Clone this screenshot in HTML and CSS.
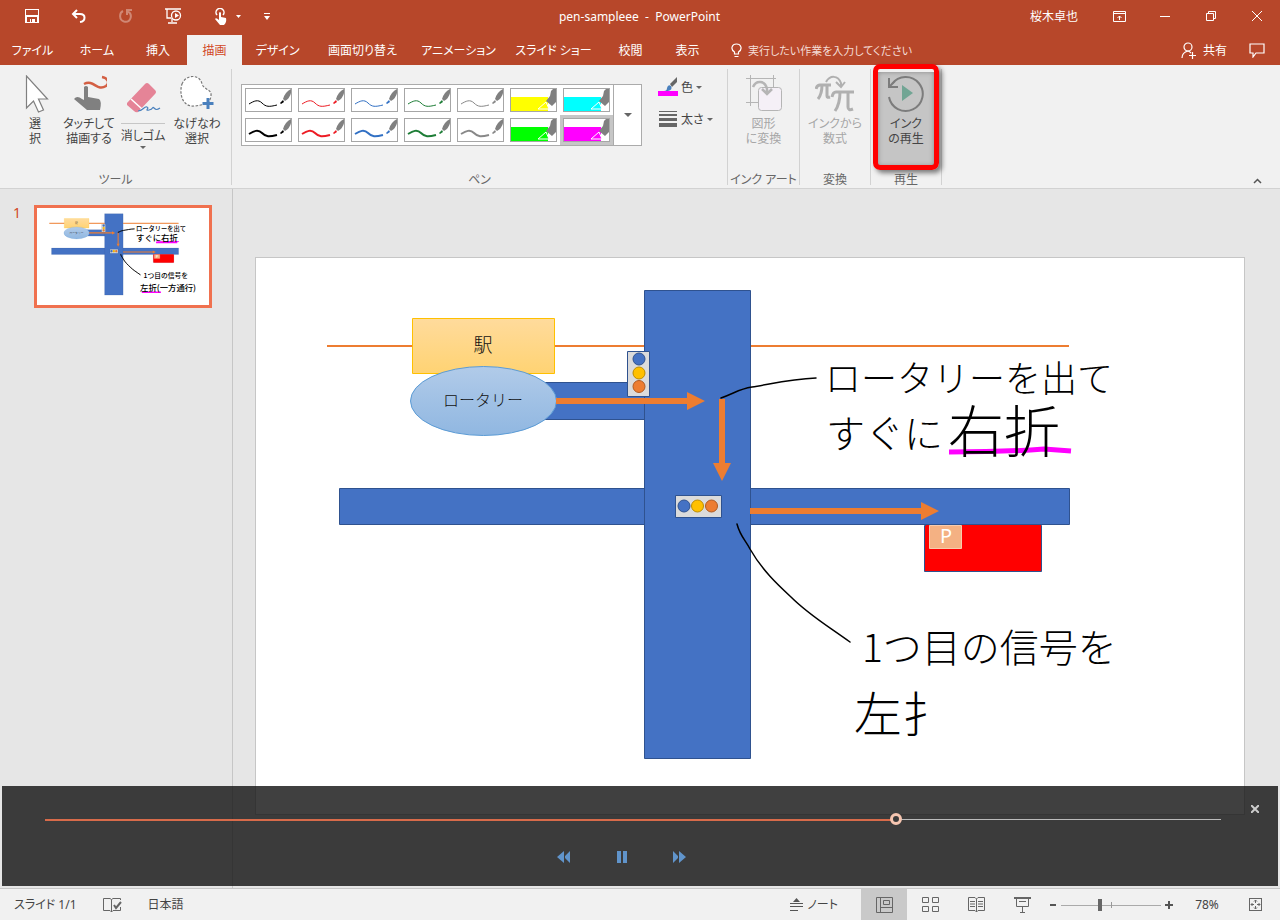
FILE: index.html
```html
<!DOCTYPE html>
<html lang="ja">
<head>
<meta charset="utf-8">
<meta name="viewport" content="width=device-width, initial-scale=1">
<title>pen-sampleee - PowerPoint</title>
<link rel="stylesheet" href="styles.css">
</head>
<body>
<svg class="defs" aria-hidden="true">
  <symbol id="pen" viewBox="0 0 45 22">
    <path d="M3 15c5-3 9-5 13-1s7 4 15 2" fill="none" stroke="currentColor"/>
    <path d="M34 14l3-3 1 2-3 2z" fill="currentColor" stroke="none"/>
    <path d="M37 10q2-7 8-10v4q-1 5-6 8z" fill="#808080" stroke="none"/>
  </symbol>
  <symbol id="marker" viewBox="0 0 45 22">
    <path d="M0 8h37v14H0z" fill="currentColor"/>
    <path d="M27 20l8-7 3 7z" fill="currentColor" stroke="#fff"/>
    <path d="M35 12l4-5 1-5 2-2h3v13l-4 4z" fill="#808080"/>
  </symbol>
  <symbol id="map" viewBox="256 258 988 556">
    <path d="M327 346h742" stroke="#ed7d31" stroke-width="2"/>
    <g fill="#4472c4" stroke="#2f528f">
      <path d="M540.5 382.5h110v37h-110zM339.5 488.5h730v36h-730z"/>
      <path d="M644.500 290.500h106v468h-106z"/>
    </g>
    <path d="M924.500 525.500h117v46h-117z" fill="#f00" stroke="#2f528f"/>
    <path d="M926 525h115v46H926z" fill="#f00"/>
    <path d="M412.500 318.500h142v55h-142z" fill="url(#gold)" stroke="#ffc000"/>
    <ellipse cx="483.500" cy="401" rx="73" ry="34.500" fill="url(#sky)" stroke="#5b9bd5"/>
    <path d="M556 398h131v-6l18 9-18 9v-6H556z" fill="#ed7d31"/>
    <path d="M719 399h6v64h6l-9 18-9-18h6z" fill="#ed7d31"/>
    <path d="M750 508h171v-6l18 9-18 9v-6H750z" fill="#ed7d31"/>
    <g fill="#dbdbdb" stroke="#2f528f"><path d="M627.500 351.500h22v45h-22zM675.500 495.500h46v22h-46z"/></g>
    <g fill="#4472c4" stroke="#2f528f"><circle cx="639" cy="359" r="6"/><circle cx="684" cy="506" r="6"/></g>
    <g fill="#ffc000" stroke="#bc8c00"><circle cx="639" cy="373" r="6"/><circle cx="697.500" cy="506" r="6"/></g>
    <g fill="#ed7d31" stroke="#ae5a21"><circle cx="639" cy="386.500" r="6"/><circle cx="711.500" cy="506" r="6"/></g>
    <path d="M929.500 525.500h32v23h-32z" fill="#f4b183" stroke="#f8cbad"/>
    <g fill="none" stroke="#000" stroke-width="1.500" stroke-linecap="round">
      <path d="M721 398c14-5 18-9 31-11 19-3 38-8 64-9M737 524c3 12 9 17 13 25 12 21 27 35 41 48 18 18 34 27 59 45"/>
    </g>
    <path d="M949 452c35 0 70-1 95-3l27 2" fill="none" stroke="#f0f" stroke-width="5"/>
  </symbol>
  <linearGradient id="gold" x2="0" y2="1"><stop stop-color="#ffdb9c"/><stop offset="1" stop-color="#ffd373"/></linearGradient>
  <linearGradient id="sky" x2="0" y2="1"><stop stop-color="#b1cbe9"/><stop offset="1" stop-color="#90b7e1"/></linearGradient>
</svg>

<div class="app">
  <header class="titlebar">
    <div class="quick">
      <button class="tool" aria-label="上書き保存"><svg width="14" height="14" viewBox="0 0 14 14"><path fill="#fff" fill-rule="evenodd" d="M0 0h14v14H0zM1 1v5h12V1zM2 8v5h3v-3h1v3h1v-3h3v3h2V8z"/></svg></button>
      <button class="tool" aria-label="元に戻す"><svg width="16" height="14" viewBox="0 0 16 14" fill="none" stroke="#fff" stroke-width="2"><path d="M6 1L2 5l4 4M2 5h7c6 0 6 7 0 8"/></svg></button>
      <button class="tool faded" aria-label="やり直し"><svg width="14" height="14" viewBox="0 0 14 14" fill="none" stroke="#fff" stroke-width="2"><path d="M4 2C0 4 0 11 5 12.500c7 1.500 9-7 4-10M8 6V1h5"/></svg></button>
      <button class="tool wide" aria-label="スライド ショーの開始"><svg width="17" height="16" viewBox="0 0 17 16" fill="none" stroke="#fff" stroke-width="1.300"><path d="M0 1h16M2 1v9h4M7 10v4M3 15h9"/><circle cx="11" cy="7.500" r="4.500"/><path d="M10 5l4 2.500-4 2.500z" fill="#fff" stroke="none"/></svg></button>
      <button class="tool" aria-label="タッチ/マウス モード"><svg width="12" height="17" viewBox="0 0 12 17"><path d="M2 7a4 4 0 1 1 6 0" fill="none" stroke="#fff" stroke-width="1.500"/><path d="M4 5q1-2 2 0v4l5 1q1 4-2 7H5L0 11q1-2 4 1z" fill="#fff"/></svg></button>
      <svg class="mini" width="5" height="3" viewBox="0 0 5 3"><path d="M0 0h5L2.500 3z" fill="#fff"/></svg>
      <button class="tool" aria-label="クイック アクセス ツール バーのユーザー設定"><svg width="6" height="7" viewBox="0 0 6 7"><path d="M0 0h6v1H0zM0 3h6L3 7z" fill="#fff"/></svg></button>
    </div>
    <h1 class="doc">pen-sampleee&nbsp; -&nbsp; PowerPoint</h1>
    <div class="window">
      <span class="user">桜木卓也</span>
      <button class="tool" aria-label="リボンの表示オプション"><svg width="13" height="11" viewBox="0 0 13 11" fill="none" stroke="#fff"><path d="M.5.5h12v10H.5zM.5 2.500h12M6.500 9V5M4.500 7l2-2 2 2"/></svg></button>
      <button class="tool" aria-label="最小化"><svg width="10" height="10" viewBox="0 0 10 10"><path d="M0 5.500h10" stroke="#fff"/></svg></button>
      <button class="tool" aria-label="元のサイズに戻す"><svg width="10" height="10" viewBox="0 0 10 10" fill="none" stroke="#fff"><path d="M.5 2.500h7v7h-7zM2.500 2V.5h7v7H8"/></svg></button>
      <button class="tool" aria-label="閉じる"><svg width="10" height="10" viewBox="0 0 10 10"><path d="M0 0l10 10M10 0L0 10" stroke="#fff"/></svg></button>
    </div>
  </header>

  <nav class="tabs">
    <div class="tablist">
      <button class="tab">ファイル</button><button class="tab">ホーム</button><button class="tab">挿入</button><button class="tab active">描画</button><button class="tab">デザイン</button><button class="tab">画面切り替え</button><button class="tab">アニメーション</button><button class="tab">スライド ショー</button><button class="tab">校閲</button><button class="tab">表示</button>
    </div>
    <label class="ask"><svg width="11" height="15" viewBox="0 0 11 15" fill="none" stroke="#fff" stroke-width="1.200"><path d="M3.500 11V9C-1 6 1 1 5.500 1S12 6 7.500 9v2zM3.500 13.500h4"/></svg><input class="askinput" type="text" placeholder="実行したい作業を入力してください" aria-label="操作アシスト"></label>
    <div class="share">
      <button class="sharebtn"><svg width="15" height="17" viewBox="0 0 15 17" fill="none" stroke="#fff" stroke-width="1.200"><circle cx="7" cy="5" r="4"/><path d="M1 16c0-4 2-6 6-7 1 0 2 1 3 2M8 13.500h7M11.500 10v7"/></svg>共有</button>
      <button class="tool" aria-label="コメント"><svg width="16" height="15" viewBox="0 0 16 15" fill="none" stroke="#fff" stroke-width="1.200"><path d="M1 1h14v9H7l-3 4v-4H1z"/></svg></button>
    </div>
  </nav>

  <section class="ribbon">
    <div class="group tools">
      <div class="row">
        <button class="big"><svg width="28" height="38" viewBox="-4 0 28 38"><path d="M1.500 1v32l7-7 5 11 5-2-5-11h9z" fill="#fff" stroke="#808080" stroke-width="1.200"/></svg><span>選<br>択</span></button>
        <button class="big"><svg width="36" height="38" viewBox="-2 0 36 38"><path d="M11 9c10-5 13 8 22 2 4-3 2-8-4-9" fill="none" stroke="#d35f43" stroke-width="2.500"/><path d="M11 12q2-2 4 0v10l11 2q3 2 1 11h-13L1 24q3-4 8 0l2 1z" fill="#808080"/></svg><span>タッチして<br>描画する</span></button>
        <button class="big eraser"><svg width="36" height="38" viewBox="-1 -2 36 38"><path d="M1 26L19 7q2-2 4 0l6 6q2 2 0 4L12 35q-2 1-4-1l-7-6z" fill="#e58497"/><path d="M5 22l11 10" stroke="#fff" stroke-width="1.500"/><path d="M12 34c5 0 6-5 9-4s-3 4 2 3 3-4 5-2 3 2 6 0" fill="none" stroke="#4a80bd" stroke-width="1.200"/></svg><span>消しゴム</span><i class="caret"></i></button>
        <button class="big"><svg width="36" height="38" viewBox="0 0 36 38"><path d="M3 9C7-1 21-1 23 9c2 6 10 5 9 12-1 8-8 9-17 10C3 32 0 18 3 9z" fill="#fff" stroke="#777" stroke-width="1.200" stroke-dasharray="2.500 1.500"/><path d="M29 23v11M23.500 28.500h11" stroke="#4a80bd" stroke-width="3"/></svg><span>なげなわ<br>選択</span></button>
      </div>
      <h2 class="caption">ツール</h2>
    </div>
    <div class="group pens">
      <div class="row">
        <div class="gallery">
          <div class="cells">
            <button class="cell black" aria-label="ペン 黒 細"><svg><use href="#pen"/></svg></button>
            <button class="cell red" aria-label="ペン 赤 細"><svg><use href="#pen"/></svg></button>
            <button class="cell blue" aria-label="ペン 青 細"><svg><use href="#pen"/></svg></button>
            <button class="cell green" aria-label="ペン 緑 細"><svg><use href="#pen"/></svg></button>
            <button class="cell gray" aria-label="ペン 灰 細"><svg><use href="#pen"/></svg></button>
            <button class="cell yellow" aria-label="蛍光ペン 黄"><svg><use href="#marker"/></svg></button>
            <button class="cell cyan" aria-label="蛍光ペン 水色"><svg><use href="#marker"/></svg></button>
            <button class="cell black thick" aria-label="ペン 黒 太"><svg><use href="#pen"/></svg></button>
            <button class="cell red thick" aria-label="ペン 赤 太"><svg><use href="#pen"/></svg></button>
            <button class="cell blue thick" aria-label="ペン 青 太"><svg><use href="#pen"/></svg></button>
            <button class="cell green thick" aria-label="ペン 緑 太"><svg><use href="#pen"/></svg></button>
            <button class="cell gray thick" aria-label="ペン 灰 太"><svg><use href="#pen"/></svg></button>
            <button class="cell lime" aria-label="蛍光ペン 緑"><svg><use href="#marker"/></svg></button>
            <button class="cell magenta selected" aria-label="蛍光ペン ピンク"><svg><use href="#marker"/></svg></button>
          </div>
          <button class="more" aria-label="その他のペン"><i class="caret"></i></button>
        </div>
        <div class="options">
          <button class="option"><svg width="20" height="20" viewBox="0 0 20 20"><path d="M0 14h20v5H0z" fill="#f0f"/><path d="M12 7l7-7v5l-5 5z" fill="#666"/><path d="M6 14q3 0 3-3 1-4 4-2 2 4-3 5z" fill="#4a80bd"/></svg>色<i class="caret"></i></button>
          <button class="option"><svg width="20" height="20" viewBox="0 0 20 20" stroke="#666"><path d="M1 2.500h18"/><path d="M1 6h18" stroke-width="2"/><path d="M1 10.500h18" stroke-width="3"/><path d="M1 16h18" stroke-width="4"/></svg>太さ<i class="caret"></i></button>
        </div>
      </div>
      <h2 class="caption">ペン</h2>
    </div>
    <div class="group art">
      <div class="row"><button class="big" disabled><svg width="36" height="38" viewBox="0 0 36 38" fill="none" stroke="#b5b5b5"><path d="M4.500 0v31M0 3.500h30M0 27.500h13M27.500 0v12"/><rect x="12.500" y="12.500" width="23" height="23" rx="3" fill="#f5f0f7"/><path d="M7 12c3-7 12-7 14 2v4M16 14l5 5 5-5" stroke-width="2.500"/></svg><span>図形<br>に変換</span></button></div>
      <h2 class="caption">インク アート</h2>
    </div>
    <div class="group">
      <div class="row"><button class="big" disabled><svg width="40" height="38" viewBox="0 0 40 38" fill="none" stroke="#b0b0b0" stroke-width="2.500"><path d="M1 14q1-4 4-4h11M7 10q0 9-4 14M12 10v11q0 2 3 1M17 22q1-5 4-5h18M25 17q0 12-5 19M33 17v15q0 4 5 2" stroke-width="3"/><path d="M11 7c4-7 12-7 15 1v3M21 7l5 5 4-5" stroke-width="2"/></svg><span>インクから<br>数式</span></button></div>
      <h2 class="caption">変換</h2>
    </div>
    <div class="group replay">
      <div class="row"><button class="big pressed" aria-pressed="true"><svg width="38" height="38" viewBox="0 0 38 38"><path d="M2 22A17 17 0 1 0 5 9M2 3v9h9" fill="none" stroke="#7c7c7c" stroke-width="2"/><path d="M2 12l6-6" stroke="#7c7c7c" stroke-width="2"/><path d="M15 10l11 8-11 8z" fill="#71a594"/></svg><span>インク<br>の再生</span></button></div>
      <h2 class="caption">再生</h2>
      <div class="highlight"></div>
    </div>
    <button class="collapse" aria-label="リボンを折りたたむ"><svg width="9" height="6" viewBox="0 0 9 6"><path d="M1 5l3.500-3.500L8 5" fill="none" stroke="#555" stroke-width="1.500"/></svg></button>
  </section>

  <main class="work">
    <aside class="slides">
      <span class="number">1</span>
      <svg class="thumb" viewBox="256 258 988 556" role="img" aria-label="スライド 1">
        <use href="#map" x="256" y="258" width="988" height="556"/>
        <path d="M327 346h85M555 346h90M751 346h318" stroke="#ed7d31" stroke-width="5"/>
        <path d="M721 398c14-5 18-9 31-11 19-3 38-8 64-9M737 524c3 12 9 17 13 25 12 21 27 35 41 48 18 18 34 27 59 45" fill="none" stroke="#000" stroke-width="5"/>
        <path d="M940 456h122M858 742h110" stroke="#f0f" stroke-width="10"/>
        <text class="label" x="483" y="352">駅</text>
        <text class="label" x="483" y="406">ロータリー</text>
        <text class="park" x="946" y="543">P</text>
        <g class="ink bold"><text class="small" x="825" y="392">ロータリーを出て</text><text class="large" x="825" y="450">すぐに右折</text><text class="medium" x="868" y="662">1つ目の信号を</text><text class="large" x="848" y="736">左折(一方通行)</text></g>
      </svg>
    </aside>
    <div class="stage">
      <svg class="slide" viewBox="256 258 988 556" role="img" aria-label="案内図">
        <use href="#map" x="256" y="258" width="988" height="556"/>
        <text class="label station" x="483" y="352">駅</text>
        <text class="label rotary" x="483" y="406">ロータリー</text>
        <text class="park" x="946" y="543">P</text>
        <g class="ink"><text class="small" x="825" y="392">ロータリーを出て</text><text class="medium" x="826" y="448">すぐに</text><text class="huge" x="948" y="452">右折</text><text class="medium" x="862" y="662">1つ目の信号を</text><text class="large" x="854" y="732">左扌</text></g>
      </svg>
    </div>
    <div class="player">
      <button class="dismiss" aria-label="再生を閉じる"><svg width="8" height="8" viewBox="0 0 8 8"><path d="M0 0l8 8M8 0L0 8" stroke="#ccc" stroke-width="2"/></svg></button>
      <input class="seek" type="range" min="0" max="1000" value="726" aria-label="再生位置">
      <div class="controls">
        <button class="tool" aria-label="前へ"><svg width="13" height="12" viewBox="0 0 13 12"><path d="M0 6l7-6v12zM8 5l5-5v12L8 7z" fill="#6094cb"/></svg></button>
        <button class="tool" aria-label="一時停止"><svg width="10" height="12" viewBox="0 0 10 12"><path d="M0 0h4v12H0zM6 0h4v12H6z" fill="#6094cb"/></svg></button>
        <button class="tool" aria-label="次へ"><svg width="13" height="12" viewBox="0 0 13 12"><path d="M13 6L6 0v12zM5 5L0 0v12l5-5z" fill="#6094cb"/></svg></button>
      </div>
    </div>
  </main>

  <footer class="status">
    <div class="info">
      <span>スライド 1/1</span>
      <button class="tool" aria-label="スペル チェック"><svg width="19" height="16" viewBox="0 0 19 16" fill="none" stroke="#666"><path d="M8.500 15V2.500L7 1.500H.5v12H7l1.500 1.500 1.500-1.500h7.500V10M8.500 2.500l1.500-1h7.500V3"/><path d="M11 8l2 3 5-6" stroke-width="2"/></svg></button>
      <span>日本語</span>
    </div>
    <button class="notes"><svg width="13" height="13" viewBox="0 0 13 13" stroke="#555"><path d="M3 4l3.500-4L10 4z" fill="#555" stroke="none"/><path d="M0 5.500h13M0 8.500h13M0 12.500h8"/></svg>ノート</button>
    <div class="views">
      <button class="view current" aria-label="標準"><svg width="17" height="16" viewBox="0 0 17 16" fill="none" stroke="#666"><path d="M.5.500h16v15H.5zM4.500.500v15M4.500 10.500h12M7.500 3.500h6v4h-6z"/></svg></button>
      <button class="view" aria-label="スライド一覧"><svg width="17" height="16" viewBox="0 0 17 16" fill="none" stroke="#666"><path d="M.5.500h6v5h-6zM10.500.500h6v5h-6zM.5 9.500h6v5h-6zM10.500 9.500h6v5h-6z"/></svg></button>
      <button class="view" aria-label="閲覧表示"><svg width="17" height="16" viewBox="0 0 17 16" fill="none" stroke="#666"><path d="M8.500 15V2l-1.500-1.500H.5v13H7l1.500 1.500 1.500-1.500h6.500V.500H10L8.500 2M2 4.500h5M2 7h5M2 9.500h5M10 4.500h5M10 7h5M10 9.500h5"/></svg></button>
      <button class="view" aria-label="スライド ショー"><svg width="17" height="16" viewBox="0 0 17 16" fill="none" stroke="#666"><path d="M0 1h17" stroke-width="2"/><path d="M2.500 1v8.500h12V1M5 4.500h7M8.500 10v5M6 15.500h5"/></svg></button>
    </div>
    <div class="zoom">
      <button class="tool" aria-label="縮小"><svg width="6" height="10" viewBox="0 0 6 10"><path d="M0 5h6" stroke="#555" stroke-width="2"/></svg></button>
      <input class="level" type="range" min="10" max="146" value="63" aria-label="ズーム">
      <button class="tool" aria-label="拡大"><svg width="8" height="10" viewBox="0 0 8 10"><path d="M0 5h8M4 1v8" stroke="#555" stroke-width="2"/></svg></button>
    </div>
    <button class="percent">78%</button>
    <button class="tool fit" aria-label="ウィンドウに合わせる"><svg width="13" height="13" viewBox="0 0 13 13" fill="none" stroke="#666"><rect x=".5" y=".5" width="12" height="12"/><path d="M6.500 5V2M5 3.500L6.500 2 8 3.500M6.500 8v3M5 9.500L6.500 11 8 9.500M5 6.500H2M3.500 5L2 6.500 3.500 8M8 6.500h3M9.500 5L11 6.500 9.500 8"/></svg></button>
  </footer>
</div>
</body>
</html>
```
FILE: styles.css
```css
* { box-sizing: border-box; }
body {
  margin: 0;
  background: #e6e6e6;
  color: #444;
  font: 12px/15px "Noto Sans", "Noto Sans CJK JP", sans-serif;
  font-feature-settings: "palt";
}
button, input { font: inherit; font-feature-settings: inherit; color: inherit; margin: 0; }
button { padding: 0; border: 0; background: none; white-space: nowrap; }
svg { display: block; flex: none; }
.defs { position: absolute; width: 0; height: 0; }
.app { display: flex; flex-direction: column; min-height: 100vh; }
.tool { display: flex; align-items: center; justify-content: center; min-width: 16px; height: 20px; }

.titlebar {
  display: grid;
  grid-template-columns: 1fr auto 1fr;
  align-items: center;
  height: 35px;
  padding: 0 15px 3px 24px;
  background: #b7472a;
  color: #fff;
}
.quick { display: flex; align-items: center; gap: 31px; }
.quick .mini { margin: 0 -13px 0 -24px; }
.faded { opacity: .35; }
.doc { margin: 0 10px 0 0; font-size: 12px; font-weight: 400; }
.window { display: flex; align-items: center; justify-content: flex-end; gap: 30px; }
.user { margin-right: 3px; }

.tabs { display: flex; height: 30px; background: #b7472a; color: #fff; }
.tablist { display: grid; grid-template-columns: 65px 64px 58px 55px 71px 99px 93px 97px 57px 57px; }
.tab.active { background: #f1f1f1; color: #d24726; }
.ask { display: flex; flex: 1; align-items: center; gap: 6px; padding-left: 15px; }
.askinput { flex: 1; min-width: 0; padding: 0; border: 0; background: none; outline: 0; font-size: 11px; }
.askinput::placeholder { color: #f4dcd5; opacity: 1; }
.share { display: flex; align-items: center; gap: 22px; padding-right: 15px; }
.sharebtn { display: flex; align-items: center; gap: 7px; }

.ribbon { position: relative; display: flex; height: 124px; padding-top: 4px; background: #f1f1f1; border-bottom: 1px solid #d2d2d2; }
.group { position: relative; display: flex; flex-direction: column; width: 71px; height: 116px; border-right: 1px solid #d2d2d2; }
.group.tools { width: 232px; }
.group.pens { width: 496px; }
.group.art { width: 72px; }
.row { display: flex; flex: 1; justify-content: center; }
.tools .row { justify-content: flex-start; padding-left: 8px; }
.pens .row { justify-content: flex-start; padding-left: 9px; }
.caption { margin: 0; text-align: center; font-size: 12px; line-height: 10px; font-weight: 400; color: #666; white-space: nowrap; }
.big { display: flex; flex-direction: column; align-items: center; gap: 3px; width: 54px; padding-top: 6px; height: 98px; line-height: 15px; }
.big span { display: block; }
.big:disabled { color: #a6a6a6; }
.eraser span { padding-top: 4px; border-top: 1px solid #c6c6c6; margin-top: 7px; }
.caret { width: 0; height: 0; border: 3px solid transparent; border-top-color: #666; border-bottom: 0; }
.gallery { display: flex; height: 62px; margin-top: 15px; border: 1px solid #ababab; background: #fff; }
.cells { display: grid; grid-template-columns: repeat(7, 53px); grid-template-rows: 30px 30px; }
.cell { padding: 3px; stroke-width: 1px; }
.cell svg { width: 47px; height: 24px; border: 1px solid #a6a6a6; background: #fff; }
.thick { stroke-width: 2px; }
.selected { background: #c6c6c6; }
.black { color: #000; }
.red { color: #ed1c24; }
.blue { color: #3170c4; }
.green { color: #1d7d36; }
.gray { color: #888; }
.yellow { color: #ff0; }
.cyan { color: #0ff; }
.lime { color: #0f0; }
.magenta { color: #f0f; }
.more { display: flex; align-items: center; justify-content: center; width: 28px; border-left: 1px solid #ababab; }
.more .caret { border-width: 4px 4px 0; }
.options { display: flex; flex-direction: column; gap: 12px; padding: 8px 0 0 16px; }
.option { display: flex; align-items: center; gap: 3px; height: 20px; }
.pressed { width: 56px; margin-top: 3px; padding-top: 3px; height: 94px; background: #c5c5c5; box-shadow: inset 0 0 5px #888; }
.highlight {
  position: absolute;
  inset: -5px 2px 15px 2px;
  border: 5px solid #f00;
  border-radius: 7px;
  box-shadow: 3px 3px 5px rgba(0, 0, 0, .5);
  pointer-events: none;
}
.collapse { margin: auto 18px 4px auto; }

.work { position: relative; display: flex; flex: 1; border-bottom: 1px solid #c6c6c6; }
.slides { display: flex; align-items: flex-start; gap: 13px; width: 233px; padding: 16px 0 0 13px; border-right: 1px solid #c6c6c6; }
.number { color: #d24726; font-size: 14px; line-height: 16px; }
.thumb { width: 178px; border: 3px solid #f0714f; background: #fff; }
.stage { flex: 1; padding: 69px 36px 72px 23px; }
.slide { width: 100%; background: #fff; box-shadow: 0 0 0 1px #c6c6c6; }
.label { font-family: "Noto Sans CJK JP", sans-serif; font-size: 16px; font-weight: 300; text-anchor: middle; fill: #111; font-feature-settings: normal; }
.station { font-size: 19px; }
.park { font-size: 20px; text-anchor: middle; fill: #fff; }
.ink { font-family: "Noto Sans CJK JP", sans-serif; font-weight: 300; fill: #000; font-feature-settings: normal; }
.ink.bold { font-weight: 500; }
.small { font-size: 36px; }
.medium { font-size: 39px; }
.large { font-size: 48px; }
.huge { font-size: 56px; }

.player { position: absolute; inset: auto 2px 2px; height: 100px; background: rgba(16, 16, 16, .8); }
.dismiss { position: absolute; top: 19px; right: 19px; }
.seek, .level { display: block; appearance: none; background: none; border: 0; }
.seek { width: calc(100% - 100px); height: 12px; margin: 27px 0 26px 43px; }
.seek::-webkit-slider-runnable-track {
  height: 12px;
  background: linear-gradient(#d86b4a, #d86b4a) 0 6px / 72% 2px no-repeat, linear-gradient(#bbb, #bbb) 0 6px / 100% 1px no-repeat;
}
.seek::-webkit-slider-thumb { appearance: none; width: 12px; height: 12px; border: 3px solid #f5c5b0; border-radius: 50%; background: #3a3a3a; }
.controls { display: flex; justify-content: center; gap: 42px; padding-right: 37px; margin-top: -4px; }

.status { display: flex; align-items: center; height: 31px; background: #f1f1f1; }
.info { display: flex; flex: 1; align-items: center; gap: 26px; padding-left: 14px; }
.notes { display: flex; align-items: center; gap: 4px; margin-right: 23px; }
.views { display: flex; align-self: stretch; }
.view { display: flex; align-items: center; justify-content: center; width: 46px; }
.current { background: #c9c9c9; }
.zoom { display: flex; align-items: center; padding-left: 0; }
.level { width: 100px; height: 14px; }
.level::-webkit-slider-runnable-track {
  height: 14px;
  background: linear-gradient(#999, #999) 50% 4px / 1px 6px no-repeat, linear-gradient(#aaa, #aaa) 0 7px / 100% 1px no-repeat;
}
.level::-webkit-slider-thumb { appearance: none; width: 4px; height: 12px; margin-top: 1px; background: #666; }
.percent { width: 50px; margin-left: 5px; }
.fit { margin: 0 17px 0 15px; }
```
